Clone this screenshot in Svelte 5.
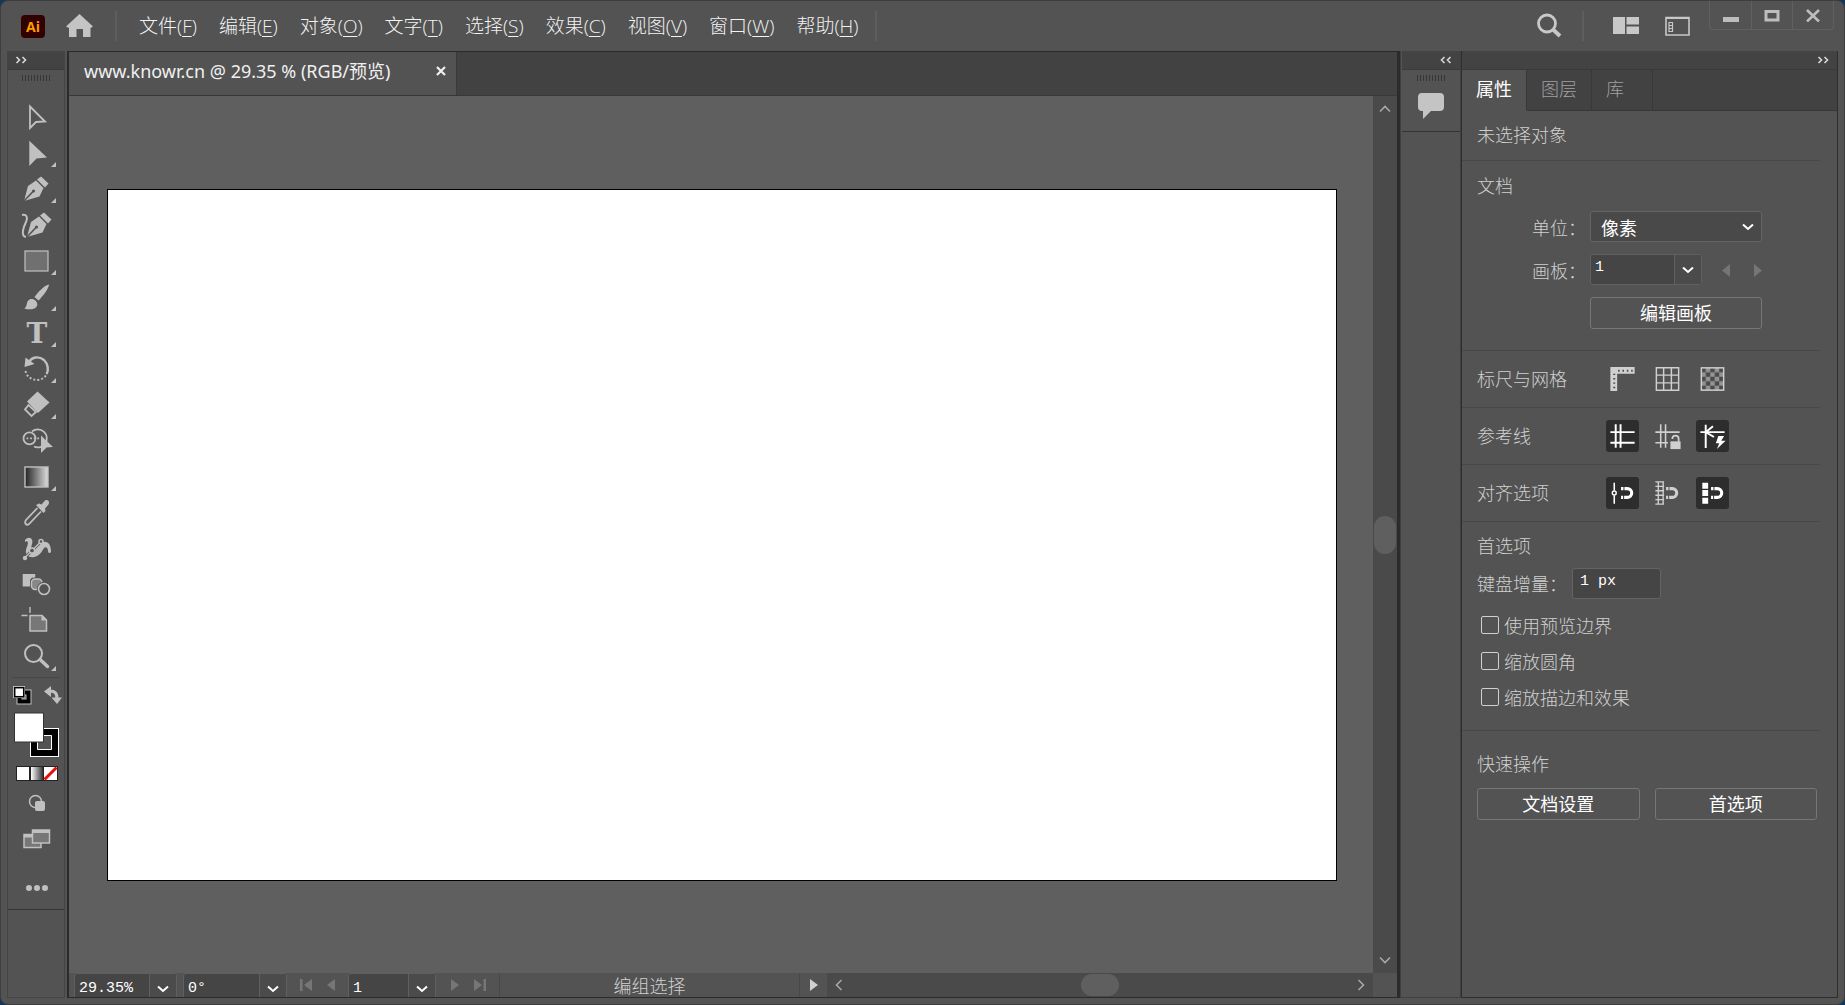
<script lang="ts">
	const menus = [
		['文件', 'F'],
		['编辑', 'E'],
		['对象', 'O'],
		['文字', 'T'],
		['选择', 'S'],
		['效果', 'C'],
		['视图', 'V'],
		['窗口', 'W'],
		['帮助', 'H']
	];

	const tools = [
		{ id: 'select', label: '选择工具' },
		{ id: 'direct', label: '直接选择工具', more: true },
		{ id: 'pen', label: '钢笔工具', more: true },
		{ id: 'curvature', label: '曲率工具' },
		{ id: 'rect', label: '矩形工具', more: true },
		{ id: 'brush', label: '画笔工具', more: true },
		{ id: 'type', label: '文字工具', more: true },
		{ id: 'rotate', label: '旋转工具', more: true },
		{ id: 'eraser', label: '橡皮擦工具', more: true },
		{ id: 'builder', label: '形状生成器工具' },
		{ id: 'gradient', label: '渐变工具', more: true },
		{ id: 'eyedropper', label: '吸管工具' },
		{ id: 'puppet', label: '操控变形工具' },
		{ id: 'blend', label: '混合工具' },
		{ id: 'artboard', label: '画板工具' },
		{ id: 'zoom', label: '缩放工具', more: true }
	];

	const toggles = [
		{ title: '标尺与网格', items: [['ruler', false], ['grid', false], ['transparency', false]] },
		{ title: '参考线', items: [['guides', true], ['lock', false], ['smart', true]] },
		{ title: '对齐选项', items: [['point', true], ['snapgrid', false], ['pixel', true]] }
	] as { title: string; items: [string, boolean][] }[];

	const options = ['使用预览边界', '缩放圆角', '缩放描边和效果'];

	let active = $state('select');
	let unit = $state('像素');
	let artboard = $state('1');
	let increment = $state('1 px');
	let zoomLevel = $state('29.35%');
	let angle = $state('0°');
</script>

{#snippet chevron()}
	<svg class="chevron" width="12" height="8" viewBox="0 0 12 8"><path d="M1 1.5 6 6 11 1.5" stroke-width="2" /></svg>
{/snippet}

{#snippet double(left: boolean)}
	<svg width="12" height="8" viewBox="0 0 12 8">
		{#if left}
			<path d="M4.5 1 1.5 4l3 3M10.5 1l-3 3 3 3" stroke-width="1.6" />
		{:else}
			<path d="M1.5 1l3 3-3 3M7.5 1l3 3-3 3" stroke-width="1.6" />
		{/if}
	</svg>
{/snippet}

{#snippet magnet(x: number)}
	<path d="M{x} 12h6.5a4.5 4.5 0 0 1 0 9H{x}" stroke-width="3.2" stroke-dasharray="2.5 1 20.1 1 3" />
{/snippet}

{#snippet penBody()}
	<path class="fill" d="M12 30 16 15 24 9.5 31.5 17 27.5 25.5Z" />
	<path class="fill" d="M25 8.5 29 5.5 36.5 12.5 33 16.5Z" />
	<path d="M12 30 21 20.5" stroke="#535353" stroke-width="1.6" />
	<circle cx="21.5" cy="20" r="1.6" fill="#535353" stroke="none" />
{/snippet}

{#snippet toolIcon(id: string)}
	{#if id === 'select'}
		<path d="M18 7.5 33 22.5 24 23 18 29Z" stroke-width="1.8" />
	{:else if id === 'direct'}
		<path class="fill" d="M17.3 5.7 35 22.5 24.5 23.5 17.3 31Z" />
	{:else if id === 'pen'}
		{@render penBody()}
	{:else if id === 'curvature'}
		<g transform="translate(3 0)">{@render penBody()}</g>
		<path d="M10 8c5-1 6 3 4 7s-6 14 0 15" stroke-width="2" />
	{:else if id === 'rect'}
		<rect x="13" y="8" width="23" height="20" fill="#707070" stroke-width="1.2" />
	{:else if id === 'brush'}
		<path class="fill" d="M22.5 18C27 12 33 6 37 5.5 37 9 31 17 26.5 21.5Z" />
		<path class="fill" d="M12.3 29.5c3-2 2-5 3.5-7.5 3-4.5 10-1 9.5 4-1 5-9 5-13 3.5Z" />
	{:else if id === 'type'}
		<text x="25" y="28">T</text>
	{:else if id === 'rotate'}
		<path d="M17 11C20 5.5 27 5 32 9c4 4 5 10 2.5 14" stroke-width="2.4" />
		<path class="fill" d="M13.5 6.5 12.5 16 22.5 13Z" />
		<path d="M13.5 20c2 10 16 12 20.5 4" stroke-width="2" stroke-dasharray="2 2" />
	{:else if id === 'eraser'}
		<path class="fill" d="M25.5 4.5 37.5 15.5 26 26 15 14.5Z" />
		<path d="M16.5 18 13 22.5 19.5 29 24 25Z" stroke-width="1.8" />
	{:else if id === 'builder'}
		<path d="M20 8.5a9 9 0 1 1 2 15" stroke-width="1.8" />
		<circle cx="17.5" cy="15.3" r="6" stroke-width="1.8" />
		<path d="M14.5 15.3h14" stroke-width="1.8" stroke-dasharray="1.8 1.8" />
		<path class="fill" d="M29 12.5 41 24 34.5 24.5 29 30Z" />
	{:else if id === 'gradient'}
		<rect x="13" y="8" width="23" height="20" fill="url(#tool-gradient)" stroke-width="1.4" />
	{:else if id === 'eyedropper'}
		<path d="M25.5 13 14 25c-2 3 0 6 3 4L29 16.5" stroke-width="1.8" />
		<path class="fill" d="M24 10 27 8.5 29.5 9.5 33 5.5c3-1.5 5 1 3.5 4L33 13.5 33.5 16 31.5 18Z" />
	{:else if id === 'puppet'}
		<path class="fill" d="M13 9c4-5 9-1 7 4l-1 4c5 0 7-6 12-6 6-1 8 4 8 10-1 2-3 1-3-1 0-3-2-5-4-3-2 3-4 8-10 9-5 1-9-2-8-7 1-4 3-7 1-9l-2 1Z" />
		<path d="M13 26.5 29 10.5" stroke="#535353" stroke-width="3" />
		<path d="M13 26.5 29 10.5" stroke-width="1.5" />
		<circle cx="13" cy="27" r="2.2" class="fill" />
		<circle cx="20" cy="19.5" r="2.6" fill="#535353" stroke-width="1.5" />
		<circle cx="29" cy="10.5" r="2" fill="#535353" stroke-width="1.5" />
	{:else if id === 'blend'}
		<rect class="fill" x="10.7" y="7" width="12.5" height="12.5" />
		<rect x="18" y="10.5" width="13.5" height="13.5" rx="4" fill="#535353" stroke="none" />
		<rect x="19.5" y="12" width="10.5" height="10.5" rx="3.5" fill="#888" stroke-width="1.4" />
		<circle cx="32" cy="22" r="7.2" fill="#535353" stroke="none" />
		<circle cx="32" cy="22" r="5.5" stroke-width="1.6" />
	{:else if id === 'artboard'}
		<path d="M18 4v6M9.5 12.5h6" stroke-width="1.4" />
		<path d="M18 12.5h12l4.5 4.5v11H18Z" fill="#777" stroke-width="1.5" />
		<path class="fill" d="M29.5 12v5.5H35Z" />
	{:else if id === 'zoom'}
		<circle cx="21.5" cy="14.5" r="8.5" stroke-width="2" />
		<path d="M28 20.5 35.5 27.5" stroke-width="3.5" stroke-linecap="round" />
	{/if}
{/snippet}

{#snippet toggleIcon(id: string)}
	{#if id === 'ruler'}
		<path class="fill" d="M4 4H29V11H11V29H4Z" />
		<path d="M12 8h15M8 11v17" stroke="#444" stroke-width="2" stroke-dasharray="1.5 3" />
	{:else if id === 'grid'}
		<path d="M5 5h23v23H5ZM12.5 5v23M20.5 5v23M5 12.5h23M5 20.5h23" stroke-width="1.5" />
	{:else if id === 'transparency'}
		<rect x="5" y="5" width="23" height="23" fill="url(#checker)" stroke-width="1.5" />
	{:else if id === 'guides'}
		<path d="M4 12.5h25M4 23.5h25M9.5 4.5v24M14.5 4.5v24" stroke-width="2" />
	{:else if id === 'lock'}
		<path d="M4 12.5h25M4 23.5h13M9.5 4.5v24M14.5 4.5v24" stroke-width="1.6" />
		<path d="M17 15h13v15H17Z" fill="#535353" stroke="none" />
		<path class="fill" d="M19.5 22H30V30H19.5Z" />
		<path d="M21.5 19.5c0-4.5 6.5-4.5 6.5 0v3" stroke-width="1.8" />
	{:else if id === 'smart'}
		<path d="M4 12.5h25M9.5 5v24M17 6.500 9.5 12.5 18 17.5" stroke-width="2" />
		<path class="fill" d="M22.5 16.5h6l-3 5H30L21 30l2.5-6H20Z" />
	{:else if id === 'point'}
		<path d="M8 6v8M8 19v8.5" stroke-width="1.6" />
		<circle cx="8" cy="16.5" r="2" stroke-width="1.5" />
		{@render magnet(15)}
	{:else if id === 'snapgrid'}
		<path d="M4 5h9M4 28h9M7 5v23M12 5v23M4 9.6h9M4 14.2h9M4 18.8h9M4 23.4h9" stroke-width="1.4" />
		{@render magnet(15)}
	{:else}
		<path class="fill" d="M6 6h6v6H6ZM6 13.5h6v6H6ZM6 21.5h6v6H6Z" />
		{@render magnet(15)}
	{/if}
{/snippet}

<div class="window">
	<header>
		<span class="logo">Ai</span>
		<button class="home" aria-label="主页">
			<svg width="27" height="24" viewBox="0 0 27 24"><path class="fill" d="M13.5 0 27 12.5 24.5 14V23H17V15H10.5V23H3V14L0 12.5Z" /></svg>
		</button>
		<span class="rule"></span>
		<nav>
			{#each menus as [name, key]}
				<button>{name}(<u>{key}</u>)</button>
			{/each}
		</nav>
		<span class="rule"></span>
		<div class="right">
			<button aria-label="搜索">
				<svg width="26" height="26" viewBox="0 0 26 26"><circle cx="11" cy="10.5" r="8.5" stroke-width="2.8" /><path d="M17 16.5 24 23" stroke-width="3.8" /></svg>
			</button>
			<span class="rule"></span>
			<button class="arrange" aria-label="排列文档">
				<svg width="26" height="18" viewBox="0 0 26 18"><path class="fill" d="M0 0h12v17H0ZM13.5 0H26v7.5H13.5ZM13.5 9.5H26V17H13.5Z" /></svg>
			</button>
			<button aria-label="切换工作区">
				<svg width="25" height="20" viewBox="0 0 25 20"><path d="M1 1.5h23v17.5H1Z" stroke-width="1.6" /><path d="M1 2h23" stroke-width="2" /><path d="M4 6.5h3.5v9H4ZM4 9.5h3.5M4 12.5h3.5" stroke-width="1.2" /></svg>
			</button>
		</div>
		<div class="controls">
			<button aria-label="最小化"><svg width="16" height="14" viewBox="0 0 16 14"><path class="fill" d="M0 9h16v5H0Z" /></svg></button>
			<button aria-label="最大化"><svg width="16" height="14" viewBox="0 0 16 14"><path d="M2 3.5h12v8.5H2Z" stroke-width="3" /></svg></button>
			<button aria-label="关闭"><svg width="16" height="14" viewBox="0 0 16 14"><path d="M2 2 14 13.5M14 2 2 13.5" stroke-width="2.6" /></svg></button>
		</div>
	</header>

	<main>
		<aside class="toolbox">
			<button class="collapse" aria-label="展开工具栏">{@render double(false)}</button>
			<div class="grip"></div>
			<div class="tools">
				{#each tools as tool}
					<button aria-label={tool.label} aria-pressed={active === tool.id} onclick={() => (active = tool.id)}>
						<svg width="48" height="36" viewBox="0 0 48 36">
							<defs>
								<linearGradient id="tool-gradient"><stop offset="0" stop-color="#222" /><stop offset="1" stop-color="#ddd" /></linearGradient>
							</defs>
							{@render toolIcon(tool.id)}
							{#if tool.more}<path class="fill" d="M44 27v5h-5Z" />{/if}
						</svg>
					</button>
				{/each}
			</div>
			<div class="swap">
				<button aria-label="默认填色和描边">
					<svg width="20" height="20" viewBox="0 0 20 20">
						<path d="M7.5 7.5h9v9h-9Z" stroke="#c0c0c0" stroke-width="6" />
						<path d="M7.5 7.5h9v9h-9Z" stroke="#000" stroke-width="4" />
						<rect x="1" y="1" width="12" height="12" fill="#c0c0c0" stroke="none" />
						<rect x="2.7" y="2.7" width="9" height="9" fill="#fff" stroke="#000" stroke-width="1.5" />
					</svg>
				</button>
				<button aria-label="互换填色和描边">
					<svg width="18" height="20" viewBox="0 0 18 20"><path d="M5 6.5c5-1 8 1 8 7" stroke-width="3.2" /><path class="fill" d="M7 1v11L0 6.5ZM7.5 12.5H18L13 19Z" /></svg>
				</button>
			</div>
			<button class="swatches" aria-label="填色和描边">
				<svg width="46" height="46" viewBox="0 0 46 46">
					<path d="M16 16h29v29H16Z" fill="#fff" stroke="none" />
					<path d="M17 17h27v27H17Z" fill="#000" stroke="none" />
					<path d="M23.5 23.5h14v14h-14Z" fill="#535353" stroke="#fff" stroke-width="1" />
					<path d="M.5 1h29v29H.5Z" fill="#fff" stroke="#333" stroke-width="1" />
				</svg>
			</button>
			<button class="modes" aria-label="颜色、渐变、无">
				<svg width="42" height="15" viewBox="0 0 42 15">
					<defs><linearGradient id="mode-gradient"><stop offset="0" stop-color="#fff" /><stop offset="1" stop-color="#333" /></linearGradient></defs>
					<path d="M0 0h42v15H0Z" fill="#222" stroke="none" />
					<path d="M1 1h12v13H1Z" fill="#fff" stroke="none" />
					<path d="M15 1h12v13H15Z" fill="url(#mode-gradient)" stroke="none" />
					<path d="M28 1h13v13H28Z" fill="#fff" stroke="none" />
					<path d="M28.5 13.5 40.5 1.5" stroke="#e80c0c" stroke-width="3" />
				</svg>
			</button>
			<button class="draw-mode" aria-label="绘图模式">
				<svg width="18" height="18" viewBox="0 0 18 18"><circle cx="7.5" cy="7.5" r="6" stroke-width="1.5" /><rect class="fill" x="7" y="7" width="10" height="10" rx="2" /></svg>
			</button>
			<button class="screen-mode" aria-label="屏幕模式">
				<svg width="28" height="20" viewBox="0 0 28 20">
					<path d="M1 5.5h17v13H1Z" fill="#777" stroke-width="1.5" /><path d="M1 7h17" stroke-width="3" />
					<path d="M9.5 1h17v13h-17Z" fill="#777" stroke-width="1.5" /><path d="M9.5 2.5h17" stroke-width="3" />
				</svg>
			</button>
			<button class="more" aria-label="编辑工具栏">
				<svg width="24" height="8" viewBox="0 0 24 8"><circle class="fill" cx="4" cy="4" r="3" /><circle class="fill" cx="12" cy="4" r="3" /><circle class="fill" cx="20" cy="4" r="3" /></svg>
			</button>
		</aside>

		<section class="document">
			<div class="doc-tabs">
				<div class="doc-tab">
					<span>www.knowr.cn @ 29.35 % (RGB/预览)</span>
					<button aria-label="关闭文档"><svg width="10" height="10" viewBox="0 0 10 10"><path d="M1 1 9 9M9 1 1 9" stroke-width="2.2" /></svg></button>
				</div>
			</div>
			<div class="stage">
				<div class="canvas"><div class="page"></div></div>
				<div class="vscroll">
					<button aria-label="向上滚动"><svg width="12" height="8" viewBox="0 0 12 8"><path d="M1 6.5 6 1.5 11 6.5" stroke-width="1.6" /></svg></button>
					<span class="thumb"></span>
					<button aria-label="向下滚动"><svg width="12" height="8" viewBox="0 0 12 8"><path d="M1 1.5 6 6.5 11 1.5" stroke-width="1.6" /></svg></button>
				</div>
			</div>
			<footer>
				<div class="combo level"><input aria-label="缩放" bind:value={zoomLevel} /><button aria-label="缩放列表">{@render chevron()}</button></div>
				<div class="combo angle"><input aria-label="旋转视图" bind:value={angle} /><button aria-label="角度列表">{@render chevron()}</button></div>
				<div class="pager">
					<button aria-label="首项" disabled><svg width="14" height="14" viewBox="0 0 14 14"><path class="fill" d="M1 1h2.5v12H1ZM13 1v12L5 7Z" /></svg></button>
					<button aria-label="上一项" disabled><svg width="14" height="14" viewBox="0 0 14 14"><path class="fill" d="M11 1v12L3 7Z" /></svg></button>
				</div>
				<div class="combo number"><input aria-label="画板导航" bind:value={artboard} /><button aria-label="画板列表">{@render chevron()}</button></div>
				<div class="pager">
					<button aria-label="下一项" disabled><svg width="14" height="14" viewBox="0 0 14 14"><path class="fill" d="M3 1v12l8-6Z" /></svg></button>
					<button aria-label="末项" disabled><svg width="14" height="14" viewBox="0 0 14 14"><path class="fill" d="M1 1v12l8-6ZM10.5 1H13v12h-2.5Z" /></svg></button>
				</div>
				<span class="status">编组选择</span>
				<button class="play" aria-label="状态栏菜单"><svg width="10" height="14" viewBox="0 0 10 14"><path class="fill" d="M1 1v12l8-6Z" /></svg></button>
				<div class="hscroll">
					<button aria-label="向左滚动"><svg width="8" height="12" viewBox="0 0 8 12"><path d="M6.5 1 1.5 6 6.5 11" stroke-width="1.6" /></svg></button>
					<span class="thumb"></span>
					<button aria-label="向右滚动"><svg width="8" height="12" viewBox="0 0 8 12"><path d="M1.5 1 6.5 6 1.5 11" stroke-width="1.6" /></svg></button>
				</div>
				<span class="corner"></span>
			</footer>
		</section>

		<aside class="dock">
			<button class="collapse" aria-label="展开面板">{@render double(true)}</button>
			<div class="dock-group">
				<div class="grip"></div>
				<button aria-label="注释"><svg width="28" height="28" viewBox="0 0 28 28"><path class="fill" d="M5 1H23q4 0 4 4V15q0 4-4 4H14L6 27V19H5q-4 0-4-4V5Q1 1 5 1Z" /></svg></button>
			</div>
		</aside>

		<aside class="properties">
			<button class="collapse" aria-label="折叠面板">{@render double(false)}</button>
			<div class="tabs" role="tablist">
				<button role="tab" aria-selected="true">属性</button>
				<button role="tab" aria-selected="false">图层</button>
				<button role="tab" aria-selected="false">库</button>
			</div>
			<div class="panel">
				<p class="selection">未选择对象</p>

				<section class="doc-props">
					<h2>文档</h2>
					<div class="field">
						<label for="unit">单位：</label>
						<div class="select">
							<select id="unit" bind:value={unit}>
								<option>像素</option>
								<option>毫米</option>
							</select>
							{@render chevron()}
						</div>
					</div>
					<div class="field">
						<label for="board">画板：</label>
						<div class="combo board"><input id="board" bind:value={artboard} /><button aria-label="画板列表">{@render chevron()}</button></div>
						<div class="steps">
							<button aria-label="上一画板" disabled><svg width="9" height="14" viewBox="0 0 9 14"><path class="fill" d="M8 1v13L0 7.5Z" /></svg></button>
							<button aria-label="下一画板" disabled><svg width="9" height="14" viewBox="0 0 9 14"><path class="fill" d="M1 1v13L9 7.5Z" /></svg></button>
						</div>
					</div>
					<button class="outline edit">编辑画板</button>
				</section>

				<svg class="defs" width="0" height="0">
					<pattern id="checker" x="5" y="5" width="9.2" height="9.2" patternUnits="userSpaceOnUse">
						<path d="M0 0h4.6v4.6H0ZM4.6 4.6h4.6v4.6H4.6Z" fill="#4a4a4a" stroke="none" />
						<path d="M4.6 0h4.6v4.6H4.6ZM0 4.6h4.6v4.6H0Z" fill="#949494" stroke="none" />
					</pattern>
				</svg>
				{#each toggles as row}
					<section class="toggle-row">
						<h2>{row.title}</h2>
						{#each row.items as [id, on]}
							<button class:on aria-label={id} aria-pressed={on}>
								<svg width="33" height="32" viewBox="0 0 33 33">{@render toggleIcon(id)}</svg>
							</button>
						{/each}
					</section>
				{/each}

				<section class="prefs">
					<h2>首选项</h2>
					<div class="increment">
						<label for="increment">键盘增量：</label>
						<input id="increment" bind:value={increment} />
					</div>
					{#each options as option}
						<label class="check"><input type="checkbox" />{option}</label>
					{/each}
				</section>

				<section class="quick">
					<h2>快速操作</h2>
					<div class="actions">
						<button class="outline">文档设置</button>
						<button class="outline">首选项</button>
					</div>
				</section>
			</div>
		</aside>
	</main>
</div>

<style>
	:global(body) {
		background: #12365c;
	}
	.window {
		box-sizing: border-box;
		height: 100vh;
		display: flex;
		flex-direction: column;
		padding: 0 6px 6px;
		border: 1px solid #3e3e3e;
		border-radius: 8px;
		background: #535353;
		color: #d0d0d0;
		font: 300 18px/24px 'Noto Sans CJK SC', sans-serif;
		overflow: hidden;
	}
	.window * {
		box-sizing: border-box;
	}
	button,
	input,
	select {
		margin: 0;
		padding: 0;
		border: 0;
		border-radius: 0;
		background: none;
		color: inherit;
		font: inherit;
		appearance: none;
		outline: none;
	}
	button {
		display: flex;
		align-items: center;
		justify-content: center;
		white-space: nowrap;
	}
	h2,
	p {
		margin: 0;
		font-size: 18px;
		font-weight: 300;
	}
	svg {
		display: block;
		flex: none;
		fill: none;
		stroke: currentColor;
	}
	.fill {
		fill: currentColor;
		stroke: none;
	}
	.chevron {
		color: #fff;
	}

	/* title bar */
	header {
		display: flex;
		align-items: center;
		flex: none;
		height: 50px;
		padding-left: 14px;
	}
	.logo {
		width: 24px;
		height: 23px;
		border-radius: 4px;
		background: #330000;
		color: #ff9a00;
		font: bold 14px/23px 'Open Sans', sans-serif;
		text-align: center;
	}
	.home {
		margin: 0 22px 0 21px;
		color: #c4c4c4;
	}
	.rule {
		width: 2px;
		height: 30px;
		background: #5e5e5e;
	}
	nav {
		display: flex;
		gap: 22px;
		margin: 0 17px 0 22px;
		color: #f2f2f2;
		font-family: 'Open Sans', 'Noto Sans CJK SC', sans-serif;
		font-size: 19px;
		font-weight: 300;
	}
	nav button {
		display: block;
	}
	u {
		text-decoration-thickness: 1px;
		text-underline-offset: 3px;
	}
	.right {
		display: flex;
		align-items: center;
		gap: 20px;
		margin-left: auto;
		color: #c8c8c8;
	}
	.arrange {
		margin: 0 6px 0 9px;
	}
	.controls {
		display: flex;
		align-self: flex-start;
		height: 29px;
		margin: 0 4px 0 19px;
		border: 1px solid #606060;
		border-top: 0;
		border-radius: 0 0 4px 4px;
		color: #bdbdbd;
	}
	.controls button {
		width: 41px;
		border-left: 1px solid #606060;
	}
	.controls button:first-child {
		border-left: 0;
	}

	main {
		display: flex;
		flex: 1;
		min-height: 0;
	}
	.collapse {
		width: 100%;
		height: 19px;
		flex: none;
		background: #434343;
		border-bottom: 1px solid #3a3a3a;
		color: #d8d8d8;
	}
	.grip {
		width: 29px;
		height: 6px;
		margin: 5px auto 0;
		background: repeating-linear-gradient(90deg, #363636 0 1px, transparent 1px 3px);
	}

	/* toolbox */
	.toolbox {
		display: flex;
		flex-direction: column;
		align-items: center;
		flex: none;
		width: 58px;
		margin-right: 2px;
		border: 1px solid #454545;
		border-top: 0;
		color: #c0c0c0;
	}
	.toolbox .collapse {
		justify-content: flex-start;
		padding-left: 7px;
	}
	.tools {
		margin-top: 18px;
		padding-bottom: 2px;
		border-bottom: 1px solid #484848;
	}
	text {
		fill: currentColor;
		stroke: none;
		font: bold 28px 'DejaVu Serif', serif;
		text-anchor: middle;
	}
	.swap {
		display: flex;
		gap: 12px;
		margin: 7px 0 0 2px;
	}
	.swatches {
		margin: 7px 0 0 2px;
	}
	.modes {
		margin: 8px 0 0 2px;
	}
	.draw-mode {
		margin: 13px 0 0 2px;
	}
	.screen-mode {
		margin: 17px 0 0 2px;
	}
	.more {
		width: 100%;
		margin-top: 35px;
		padding: 0 0 17px 2px;
		border-bottom: 1px solid #353535;
	}

	/* document window */
	.document {
		display: flex;
		flex-direction: column;
		flex: 1;
		min-width: 0;
		border: solid #2b2b2b;
		border-width: 1px 3px 1px 2px;
	}
	.doc-tabs {
		display: flex;
		flex: none;
		height: 44px;
		background: #424242;
		border-bottom: 1px solid #383838;
	}
	.doc-tab {
		display: flex;
		align-items: center;
		justify-content: space-between;
		width: 388px;
		padding: 0 10px 5px 15px;
		border-right: 1px solid #3a3a3a;
		background: #535353;
		color: #f0f0f0;
		font-family: 'Noto Sans', 'Noto Sans CJK SC', sans-serif;
		font-weight: 400;
		white-space: nowrap;
	}
	.stage {
		display: flex;
		flex: 1;
		min-height: 0;
	}
	.canvas {
		display: flex;
		flex: 1;
		padding: 93px 36px 92px 38px;
		background: #5f5f5f;
	}
	.page {
		flex: 1;
		border: 1px solid #000;
		background: #fff;
	}
	.vscroll {
		display: flex;
		flex-direction: column;
		align-items: center;
		justify-content: space-between;
		width: 24px;
		padding: 9px 0;
		background: #4a4a4a;
		color: #a8a8a8;
	}
	.thumb {
		width: 22px;
		height: 38px;
		border-radius: 11px;
		background: #5f5f5f;
	}
	footer {
		display: flex;
		flex: none;
		height: 24px;
		padding-left: 5px;
		overflow: hidden;
	}
	.combo {
		display: flex;
		height: 31px;
		border: 1px solid #606060;
		border-radius: 3px;
		background: #454545;
		color: #fff;
		font: 400 15px/24px 'Liberation Mono', monospace;
	}
	.combo input {
		flex: 1;
		min-width: 0;
		padding: 0 4px;
	}
	.combo button {
		width: 27px;
		border-left: 1px solid #606060;
		background: #4b4b4b;
	}
	.level {
		width: 103px;
		margin-right: 6px;
	}
	.angle {
		width: 104px;
	}
	.number {
		width: 88px;
	}
	.pager {
		display: flex;
		gap: 11px;
		padding: 0 10px 0 12px;
		color: #767676;
	}
	.status {
		flex: 1;
		margin-left: 2px;
		border: solid #484848;
		border-width: 0 1px;
		text-align: center;
	}
	.play {
		width: 27px;
	}
	.hscroll {
		display: flex;
		align-items: center;
		justify-content: space-between;
		width: 546px;
		padding: 0 8px;
		background: #4a4a4a;
		color: #a8a8a8;
	}
	.hscroll .thumb {
		width: 38px;
		height: 22px;
	}
	.corner {
		width: 24px;
	}

	/* collapsed dock */
	.dock {
		display: flex;
		flex-direction: column;
		flex: none;
		width: 61px;
		padding-left: 1px;
		border: 1px solid #404040;
		border-width: 0 1px 1px;
	}
	.dock .collapse {
		justify-content: flex-end;
		padding-right: 8px;
	}
	.dock-group {
		height: 62px;
		border-bottom: 1px solid #353535;
		color: #c4c4c4;
	}
	.dock-group button {
		margin: 11px auto 0;
	}

	/* properties */
	.properties {
		display: flex;
		flex-direction: column;
		flex: none;
		width: 377px;
		border: solid #2e2e2e;
		border-width: 0 1px 1px;
	}
	.properties .collapse {
		justify-content: flex-end;
		padding-right: 8px;
	}
	.tabs {
		display: flex;
		flex: none;
		height: 41px;
		background: #424242;
		color: #a0a0a0;
	}
	.tabs button {
		padding: 0 14px 5px;
		border: solid #383838;
		border-width: 0 1px 1px 0;
	}
	.tabs button:first-child {
		border-bottom-color: #535353;
		background: #535353;
		color: #fff;
		font-weight: 400;
	}
	.tabs button:last-child {
		padding-right: 28px;
	}
	.tabs::after {
		content: '';
		flex: 1;
		border-bottom: 1px solid #383838;
	}
	.panel {
		display: flex;
		flex-direction: column;
		padding-right: 17px;
	}
	.selection {
		padding: 11px 15px 14px;
		border-bottom: 1px solid #484848;
	}
	.panel section {
		padding-left: 15px;
		border-bottom: 1px solid #484848;
	}
	.panel h2 {
		padding-bottom: 2px;
	}
	.doc-props {
		display: grid;
		gap: 12px;
		padding-top: 12px;
		padding-bottom: 21px;
	}
	.field {
		display: flex;
		align-items: center;
		height: 31px;
		padding-left: 55px;
	}
	.field label {
		width: 58px;
		white-space: nowrap;
	}
	.select {
		position: relative;
		width: 172px;
	}
	.select select {
		width: 100%;
		height: 31px;
		padding-left: 10px;
		border: 1px solid #646464;
		border-radius: 3px;
		background: #494949;
		color: #fff;
		font-weight: 400;
	}
	.select .chevron {
		position: absolute;
		right: 8px;
		top: 12px;
		pointer-events: none;
	}
	.board {
		width: 112px;
	}
	.board input,
	.increment input {
		padding-bottom: 4px;
	}
	.steps {
		display: flex;
		gap: 22px;
		margin-left: 20px;
		color: #757575;
	}
	.outline {
		height: 32px;
		padding-bottom: 2px;
		border: 1px solid #767676;
		border-radius: 3px;
		color: #fff;
		font-weight: 400;
	}
	.edit {
		width: 172px;
		margin-left: 113px;
	}
	.defs {
		position: absolute;
	}
	.toggle-row {
		display: flex;
		align-items: center;
		gap: 12px;
		height: 57px;
	}
	.toggle-row h2 {
		width: 117px;
	}
	.toggle-row button {
		height: 32px;
		border-radius: 3px;
	}
	.toggle-row .on {
		background: #2d2d2d;
		color: #fff;
	}
	.prefs {
		padding-top: 11px;
		padding-bottom: 15px;
	}
	.increment {
		display: flex;
		align-items: center;
		margin: 9px 0 8px;
	}
	.increment label {
		width: 95px;
		padding-bottom: 2px;
		white-space: nowrap;
	}
	.increment input {
		width: 89px;
		height: 31px;
		padding-left: 7px;
		border: 1px solid #646464;
		border-radius: 3px;
		background: #454545;
		color: #fff;
		font: 400 15px/24px 'Liberation Mono', monospace;
	}
	.check {
		display: flex;
		align-items: center;
		gap: 5px;
		height: 36px;
		padding-left: 4px;
	}
	.check input {
		width: 18px;
		height: 18px;
		border: 1px solid #d0d0d0;
		border-radius: 2px;
	}
	.panel .quick {
		padding-top: 20px;
		border-bottom: 0;
	}
	.actions {
		display: flex;
		gap: 15px;
		margin: 11px 3px 0 0;
	}
	.actions button {
		flex: 1;
	}
</style>
